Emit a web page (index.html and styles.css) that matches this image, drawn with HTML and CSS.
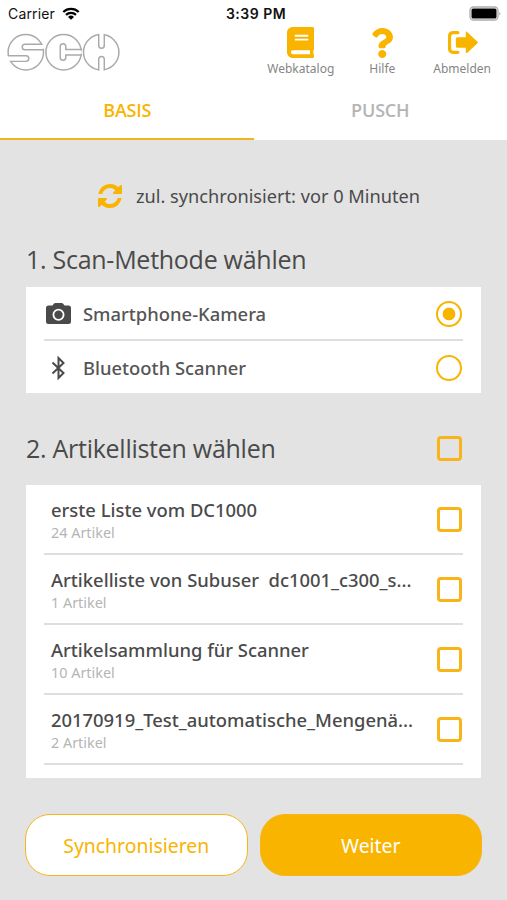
FILE: index.html
```
<!DOCTYPE html>
<html lang="de">

<head>
    <meta charset="UTF-8">
    <meta name="viewport" content="width=device-width, initial-scale=1.0">
    <title>SCH Scanner</title>
    <link rel="stylesheet" href="styles.css">
</head>

<body>
    <div class="app">
        <header class="header">
            <div class="status-bar">
                <div class="carrier">
                    <span>Carrier</span>
                    <svg class="wifi" viewBox="0 0 18 13">
                        <path d="M1.3 5a11 11 0 0 1 15.4 0M4 7.9a7.2 7.2 0 0 1 10 0" fill="none" stroke="#000" stroke-width="2.2" />
                        <path d="M9 12.8L6 9.9a4.3 4.3 0 0 1 6 0z" />
                    </svg>
                </div>
                <span class="time">3:39 PM</span>
                <svg class="battery" viewBox="0 0 34 16">
                    <rect x="3" y="1" width="28" height="13" rx="3.5" fill="#fff" stroke="#aaa" stroke-width="1.3" />
                    <rect x="4.5" y="2.5" width="25" height="10" rx="1.5" />
                    <path d="M32.500 5.500v4q1.500-2 0-4z" fill="#888" />
                </svg>
            </div>
            <div class="top-row">
                <svg class="logo" viewBox="0 0 116 40">
                    <defs>
                        <clipPath id="c1"><circle cx="18.8" cy="20.3" r="18.4" /></clipPath>
                        <clipPath id="c2"><circle cx="56.6" cy="20.3" r="18.4" /></clipPath>
                        <clipPath id="c3"><circle cx="94.200" cy="20.3" r="18.4" /></clipPath>
                    </defs>
                    <g class="logo-disc">
                        <circle cx="18.8" cy="20.3" r="17.7" />
                        <circle cx="56.6" cy="20.3" r="17.7" />
                        <circle cx="94.2" cy="20.3" r="17.7" />
                    </g>
                    <g class="slot-edge">
                        <path d="M18 15H40M0 26.600H19" clip-path="url(#c1)" />
                        <path d="M56 14.500V25.500M56 20.300H76" clip-path="url(#c2)" />
                        <path d="M94.500 0V13.500M94.500 27.200V42" clip-path="url(#c3)" />
                    </g>
                    <g class="slot">
                        <path d="M18 15H35.500M0 26.600H19" />
                        <path d="M56 14.500V25.500M56 20.300H73" />
                        <path d="M94.500 0V13.500M94.500 27.200V42" />
                    </g>
                </svg>
                <nav class="menu">
                    <a class="menu-item">
                        <svg class="menu-icon" viewBox="0 0 448 512">
                            <path d="M448 360V24c0-13.300-10.700-24-24-24H96C43 0 0 43 0 96v320c0 53 43 96 96 96h328c13.300 0 24-10.700 24-24v-16c0-7.500-3.500-14.300-8.900-18.700-4.200-15.400-4.200-59.300 0-74.700 5.400-4.300 8.900-11.100 8.900-18.600zM128 134c0-3.300 2.700-6 6-6h212c3.300 0 6 2.700 6 6v20c0 3.300-2.700 6-6 6H134c-3.300 0-6-2.700-6-6v-20zm0 64c0-3.300 2.700-6 6-6h212c3.300 0 6 2.700 6 6v20c0 3.300-2.700 6-6 6H134c-3.300 0-6-2.700-6-6v-20zm253.400 250H96c-17.700 0-32-14.300-32-32 0-17.600 14.400-32 32-32h285.400c-1.900 17.100-1.900 46.900 0 64z" />
                        </svg>
                        <span>Webkatalog</span>
                    </a>
                    <a class="menu-item help">
                        <svg class="menu-icon" viewBox="0 0 384 512">
                            <path d="M202 0C122.500 0 69.400 32.500 27.700 90.500c-7.600 10.500-5.300 25.100 5.100 33l43.100 32.700c10.300 7.900 25.100 6 33.100-4.200 25-31.800 43.600-50.100 82.800-50.100 30.800 0 68.800 19.800 68.800 49.600 0 22.600-18.600 34.200-49 51.200-35.400 19.900-82.300 44.600-82.300 106.400V320c0 13.300 10.700 24 24 24h72.500c13.300 0 24-10.700 24-24v-5.800c0-42.900 125.300-44.600 125.300-160.600C375 66.300 284.400 0 202 0zM192 373.500c-38.200 0-69.300 31.100-69.300 69.300S153.800 512 192 512s69.300-31.100 69.300-69.300-31.100-69.200-69.300-69.200z" />
                        </svg>
                        <span>Hilfe</span>
                    </a>
                    <a class="menu-item">
                        <svg class="menu-icon" viewBox="0 0 512 512">
                            <path d="M180 94H106Q42 94 42 158V354Q42 418 106 418H180" fill="none" stroke="#f9b400" stroke-width="52" stroke-linecap="round" />
                            <path d="M310 83Q310 70 321 76Q328 78 336 88L504 243Q514 256 504 269L336 424Q310 442 310 411V344H172Q146 344 146 318V194Q146 168 172 168H310Z" />
                        </svg>
                        <span>Abmelden</span>
                    </a>
                </nav>
            </div>
            <div class="tabs">
                <div class="tab active">BASIS</div>
                <div class="tab">PUSCH</div>
            </div>
        </header>

        <main class="content">
            <div class="sync">
                <svg class="sync-icon" viewBox="0 0 1536 1536">
                    <path d="M1511 928q0 5-1 7-64 268-268 434.500T764 1536q-146 0-282.500-55T238 1324l-129 129q-19 19-45 19t-45-19-19-45V960q0-26 19-45t45-19h448q26 0 45 19t19 45-19 45l-137 137q71 66 161 102t187 36q134 0 250-65t186-179q11-17 53-117 8-23 30-23h192q13 0 22.500 9.500t9.500 22.500zm25-800v448q0 26-19 45t-45 19h-448q-26 0-45-19t-19-45 19-45l138-138Q969 256 768 256q-134 0-250 65T332 500q-11 17-53 117-8 23-30 23H50q-13 0-22.500-9.500T18 608v-7q65-268 270-434.500T768 0q146 0 284 55.500T1297 212l130-129q19-19 45-19t45 19 19 45z" />
                </svg>
                <span>zul. synchronisiert: vor 0 Minuten</span>
            </div>

            <h2 class="title">1. Scan-Methode wählen</h2>
            <div class="card methods">
                <div class="method">
                    <svg class="method-icon" viewBox="0 0 26 24">
                        <path fill-rule="evenodd" d="M3 3.500H7L8.500 1.500Q9 1 10 1H16Q17 1 17.500 1.500L19 3.500H23Q25.500 3.500 25.500 6V19.500Q25.500 22 23 22H3Q.5 22 .5 19.500V6Q.5 3.500 3 3.500ZM13 6.800A6 6 0 1 0 13 18.800A6 6 0 1 0 13 6.800Z" />
                        <circle cx="13" cy="12.800" r="4.200" />
                    </svg>
                    <span class="method-name">Smartphone-Kamera</span>
                    <span class="radio checked"></span>
                </div>
                <div class="method">
                    <svg class="method-icon" viewBox="0 0 26 24">
                        <path d="M7 6.500L18 17L13 22V2L18 7L7 17.500" fill="none" stroke="#4a4a4a" stroke-width="2" />
                    </svg>
                    <span class="method-name">Bluetooth Scanner</span>
                    <span class="radio"></span>
                </div>
            </div>

            <div class="list-head">
                <h2 class="title">2. Artikellisten wählen</h2>
                <span class="checkbox"></span>
            </div>
            <div class="card lists">
                <div class="list">
                    <div class="list-text">
                        <div class="name">erste Liste vom DC1000</div>
                        <div class="count">24 Artikel</div>
                    </div>
                    <span class="checkbox"></span>
                </div>
                <div class="list">
                    <div class="list-text">
                        <div class="name">Artikelliste von Subuser&nbsp; dc1001_c300_s...</div>
                        <div class="count">1 Artikel</div>
                    </div>
                    <span class="checkbox"></span>
                </div>
                <div class="list">
                    <div class="list-text">
                        <div class="name">Artikelsammlung für Scanner</div>
                        <div class="count">10 Artikel</div>
                    </div>
                    <span class="checkbox"></span>
                </div>
                <div class="list">
                    <div class="list-text">
                        <div class="name">20170919_Test_automatische_Mengenä...</div>
                        <div class="count">2 Artikel</div>
                    </div>
                    <span class="checkbox"></span>
                </div>
            </div>

            <div class="buttons">
                <button type="button" class="btn">Synchronisieren</button>
                <button type="button" class="btn btn-main">Weiter</button>
            </div>
        </main>
    </div>
</body>

</html>
```
FILE: styles.css
```
* {
    box-sizing: border-box;
}

body {
    margin: 0;
    font-family: "Noto Sans", "Open Sans", sans-serif;
    color: #4a4a4a;
    background-color: #e3e3e3;
}

.app {
    width: 507px;
    height: 900px;
    overflow: hidden;
}

/* header */
.header {
    height: 140px;
    background-color: #fff;
}

.status-bar {
    height: 27px;
    padding: 0 6px 0 8px;
    display: grid;
    grid-template-columns: 1fr auto 1fr;
    align-items: center;
    font-family: Inter, sans-serif;
    font-size: 14px;
    color: #111;
}

.carrier {
    display: flex;
    align-items: center;
    gap: 7px;
    letter-spacing: 0.15px;
}

.wifi {
    width: 18px;
    height: 13px;
}

.time {
    padding-left: 3px;
    font-weight: 600;
    letter-spacing: 0.5px;
}

.battery {
    width: 34px;
    height: 16px;
    justify-self: end;
}

.top-row {
    height: 53px;
    display: flex;
    justify-content: space-between;
    padding: 0 16px 0 7px;
}

.logo {
    width: 116px;
    height: 40px;
    margin-top: 5px;
}

.logo-disc {
    fill: #fff;
    stroke: #aaa;
    stroke-width: 1.5;
}

.slot-edge {
    fill: none;
    stroke: #aaa;
    stroke-width: 7;
    stroke-linecap: round;
}

.slot {
    fill: none;
    stroke: #fff;
    stroke-width: 4.1;
    stroke-linecap: round;
}

.menu {
    display: flex;
    gap: 35px;
}

.menu-item {
    display: flex;
    flex-direction: column;
    align-items: center;
    font-size: 12px;
    line-height: 18px;
    color: #858585;
}

.menu-item.help {
    margin-right: 3px;
}

.menu-icon {
    height: 31px;
    margin-bottom: 2px;
    fill: #f9b400;
}

.help .menu-icon {
    height: 30px;
    margin-top: 1px;
}

.tabs {
    height: 60px;
    display: flex;
}

.tab {
    width: 50%;
    text-align: center;
    font-family: "Open Sans", "Noto Sans", sans-serif;
    font-size: 18px;
    font-weight: 600;
    line-height: 60px;
    letter-spacing: -0.2px;
    color: #b5b5b5;
}

.tab.active {
    padding-left: 1px;
    color: #f9b400;
    border-bottom: 2px solid #f0b41c;
}

/* content */
.content {
    padding: 0 26px;
}

.sync {
    height: 92px;
    padding: 20px 0 0 11px;
    display: flex;
    justify-content: center;
    align-items: center;
    gap: 14px;
    font-size: 18.2px;
}

.sync-icon {
    width: 24px;
    height: 24px;
    fill: #f9b400;
}

.title {
    margin: 0;
    font-family: "Open Sans", "Noto Sans", sans-serif;
    font-size: 25px;
    font-weight: 400;
    line-height: 55px;
    letter-spacing: -0.27px;
}

.card {
    background-color: #fff;
    padding: 0 18px;
}

.methods {
    height: 106px;
}

.method {
    height: 52px;
    display: flex;
    align-items: center;
    gap: 11px;
    padding: 1px 0 0 1px;
    font-size: 18.4px;
    font-weight: 500;
}

.method:first-child {
    height: 54px;
    padding-top: 2px;
    border-bottom: 2px solid #dedede;
}

.method-name {
    padding-bottom: 1px;
    color: #555;
}

.method-icon {
    width: 27px;
    height: 24px;
    fill: #4a4a4a;
}

.radio {
    width: 26px;
    height: 26px;
    margin: 0 1px 0 auto;
    border: 2px solid #f9b400;
    border-radius: 50%;
}

.radio.checked {
    background: radial-gradient(circle, #f9b400 6px, transparent 6.7px);
}

.list-head {
    height: 92px;
    padding: 28px 19px 0 0;
    display: flex;
    justify-content: space-between;
}

.checkbox {
    flex: none;
    width: 25px;
    height: 25px;
    border: 3px solid #f9b41a;
    border-radius: 4px;
}

.list-head .checkbox {
    margin-top: 15px;
}

.lists {
    height: 293px;
}

.list {
    height: 70px;
    padding: 0 1px 0 7px;
    display: flex;
    justify-content: space-between;
    align-items: center;
    border-bottom: 2px solid #dedede;
}

.list-text {
    padding-top: 2px;
}

.name {
    font-size: 18.4px;
    font-weight: 500;
    line-height: 24px;
}

.count {
    font-size: 14.4px;
    line-height: 21px;
    color: #b5b5b5;
}

.buttons {
    margin: 36px -1px 0;
    display: flex;
    gap: 12px;
}

.btn {
    flex: 1;
    height: 62px;
    border: 1.5px solid #f9b41a;
    border-radius: 25px;
    background-color: #fff;
    color: #f9b400;
    font-family: inherit;
    font-size: 19.4px;
}

.btn-main {
    background-color: #f9b400;
    color: #fff;
}
```
